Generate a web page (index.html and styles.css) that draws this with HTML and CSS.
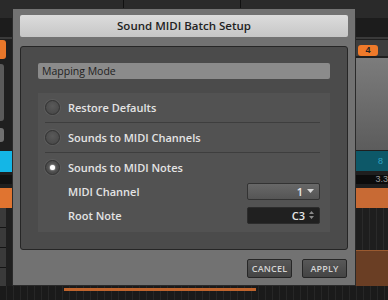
FILE: index.html
```html
<!DOCTYPE html>
<html>
<head>
<meta charset="utf-8">
<link rel="stylesheet" href="styles.css">
</head>
<body>
<div class="bg">
  <div class="bg-top"></div>
  <div class="bg-top2"></div>
  <div class="sep s1"></div>
  <div class="sep s2"></div>
  <div class="l-orange"></div>
  <div class="l-gray"></div>
  <div class="l-gray2"></div>
  <div class="l-cyan"></div>
  <div class="l-line"></div>
  <div class="l-orange2"></div>
  <div class="l-rows"><span></span><span></span><span></span><span></span></div>
  <div class="r-strip"></div>
  <div class="r-badge">4</div>
  <div class="r-gray"></div>
  <div class="r-teal">8</div>
  <div class="r-num">3.3</div>
  <div class="r-orange"></div>
  <div class="r-grid"></div>
  <div class="r-brown"></div>
  <div class="b-grid"></div>
  <div class="b-orange"></div>
</div>

<div class="dialog">
  <div class="title">Sound MIDI Batch Setup</div>
  <div class="panel">
    <div class="section-head">Mapping Mode</div>
    <div class="group">
      <div class="row sep-row"><span class="radio"></span><span class="label">Restore Defaults</span></div>
      <div class="row sep-row"><span class="radio"></span><span class="label">Sounds to MIDI Channels</span></div>
      <div class="row last"><span class="radio on"></span><span class="label">Sounds to MIDI Notes</span></div>
      <div class="sub">
        <span class="label">MIDI Channel</span>
        <div class="dropdown"><span>1</span><svg width="7" height="4" viewBox="0 0 7 4"><path d="M0 0h7L3.5 4z" fill="#d8d8d8"/></svg></div>
      </div>
      <div class="sub sub2">
        <span class="label">Root Note</span>
        <div class="spin"><span>C3</span><svg width="5" height="8" viewBox="0 0 5 8"><path d="M0 3L2.5 0L5 3z M0 5h5L2.5 8z" fill="#8a8a8a"/></svg></div>
      </div>
    </div>
  </div>
  <div class="footer">
    <button class="btn">CANCEL</button>
    <button class="btn">APPLY</button>
  </div>
</div>
</body>
</html>
```

FILE: styles.css
```css
html, body {
  margin: 0;
  padding: 0;
}
body {
  width: 388px;
  height: 300px;
  position: relative;
  overflow: hidden;
  background: #1f1f1f;
  font-family: "Open Sans", "Liberation Sans", sans-serif;
}
.bg > div { position: absolute; }
.bg-top { left: 0; top: 0; width: 388px; height: 18px; background: #2a2a2a; }
.bg-top2 { left: 0; top: 18px; width: 388px; height: 19px; background: #1c1c1c; border-bottom: 2px solid #3a3a3a; }
.sep { top: 0; width: 1px; height: 37px; background: #111; }
.s1 { left: 123px; }
.s2 { left: 240px; }
.l-orange { left: 0; top: 40px; width: 6px; height: 19px; background: #e8772a; border-radius: 0 3px 3px 0; }
.l-gray { left: 0; top: 64px; width: 4px; height: 57px; background: #5a5a5a; border-radius: 0 3px 3px 0; }
.l-gray2 { left: 0; top: 128px; width: 4px; height: 14px; background: #707070; border-radius: 0 3px 3px 0; }
.l-cyan { left: 0; top: 151px; width: 12px; height: 21px; background: #14b6e6; }
.l-line { left: 0; top: 175px; width: 12px; height: 9px; background: #111; }
.l-orange2 { left: 0; top: 188px; width: 12px; height: 20px; background: #e07430; }
.l-rows { left: 0; top: 208px; width: 12px; height: 80px; display: flex; flex-direction: column; }
.l-rows span { flex: 1; background: #3a3a3a; border-bottom: 1px solid #151515; width: 6px; }
.r-strip { left: 356px; top: 40px; width: 32px; height: 16px; background: #3d3d3d; }
.r-badge { left: 358px; top: 45px; width: 20px; height: 11px; background: #f07a2a; border-radius: 3px; font: bold 9px "Liberation Sans", sans-serif; color: #222; text-align: center; line-height: 11px; }
.r-gray { left: 356px; top: 58px; width: 32px; height: 92px; background: linear-gradient(#7c7c7c, #5c5c5c); }
.r-teal { left: 356px; top: 151px; width: 32px; height: 20px; background: #0d5868; color: #2ea3c4; font: 9px "Liberation Sans", sans-serif; line-height: 20px; text-align: right; padding-right: 5px; box-sizing: border-box; }
.r-num { left: 356px; top: 175px; width: 32px; height: 9px; background: #0c0c0c; color: #9a9a9a; font: 9px "Liberation Sans", sans-serif; line-height: 9px; text-align: right; }
.r-orange { left: 356px; top: 188px; width: 32px; height: 20px; background: #c86a34; }
.r-grid { left: 356px; top: 208px; width: 32px; height: 42px; background: repeating-linear-gradient(90deg, #1e1e1e 0 6px, #2a2a2a 6px 7px); }
.r-brown { left: 356px; top: 250px; width: 32px; height: 40px; background: #6a3e24; border-top: 1px solid #9a5a30; }
.b-grid { left: 0; top: 286px; width: 388px; height: 14px; background: repeating-linear-gradient(90deg, #1a1a1a 0 6px, #262626 6px 7px); }
.b-orange { left: 64px; top: 288px; width: 192px; height: 3px; background: #c0642c; }

.dialog {
  position: absolute;
  left: 12px;
  top: 8px;
  width: 344px;
  height: 278px;
  box-sizing: border-box;
  background: #727272;
  border: 1px solid #2a2a2a;
  padding: 6px 7px 0 7px;
  display: flex;
  flex-direction: column;
}
.title {
  height: 22px;
  background: linear-gradient(#dcdcdc, #c6c6c6);
  border-radius: 2px;
  color: #222;
  font-weight: 600;
  font-size: 11.5px;
  line-height: 22px;
  text-align: center;
  margin-bottom: 9px;
}
.panel {
  height: 204px;
  box-sizing: border-box;
  background: #4b4b4b;
  border: 1px solid #262626;
  border-radius: 3px;
  padding: 16px 17px 0 17px;
}
.section-head {
  height: 16px;
  background: #8b8b8b;
  border-radius: 2px;
  color: #1e1e1e;
  font-size: 10.5px;
  line-height: 16px;
  padding-left: 4px;
  margin-bottom: 14px;
}
.group {
  height: 139px;
  background: #525252;
  padding: 0 10px 0 7px;
}
.row {
  height: 29px;
  display: flex;
  align-items: center;
  gap: 8px;
}
.row.last { height: 28px; }
.sep-row { border-bottom: 1px solid #3e3e3e; }
.label {
  color: #e4e4e4;
  font-weight: 600;
  font-size: 11px;
}
.radio {
  width: 13px;
  height: 13px;
  border-radius: 50%;
  background: radial-gradient(circle at 50% 40%, #5a5a5a, #444);
  border: 1px solid #333;
  box-shadow: 0 0 0 1px #5c5c5c;
  flex: none;
  position: relative;
}
.radio.on::after {
  content: "";
  position: absolute;
  left: 4px;
  top: 4px;
  width: 5px;
  height: 5px;
  border-radius: 50%;
  background: #fff;
  box-shadow: 0 0 2px #fff;
}
.sub {
  height: 20px;
  display: flex;
  align-items: center;
  justify-content: space-between;
  padding-left: 23px;
}
.sub2 { margin-top: 4px; }
.dropdown, .spin {
  width: 73px;
  height: 17px;
  box-sizing: border-box;
  border-radius: 2px;
  display: flex;
  align-items: center;
  justify-content: flex-end;
  gap: 4px;
  padding-right: 5px;
  color: #e8e8e8;
  font-weight: 600;
  font-size: 11px;
}
.dropdown {
  background: linear-gradient(#686868, #555);
  border: 1px solid #333;
}
.spin {
  background: #202020;
  border: 1px solid #2c2c2c;
}
.footer {
  flex: 1;
  display: flex;
  justify-content: flex-end;
  align-items: flex-start;
  gap: 10px;
  padding-top: 9px;
  padding-right: 1px;
}
.btn {
  height: 19px;
  padding: 0;
  width: 45px;
  background: linear-gradient(#585858, #444);
  border: 1px solid #262626;
  border-radius: 2px;
  color: #d4d4d4;
  font-family: "Open Sans", "Liberation Sans", sans-serif;
  font-weight: 600;
  font-size: 9px;
  letter-spacing: 0.2px;
}
```
